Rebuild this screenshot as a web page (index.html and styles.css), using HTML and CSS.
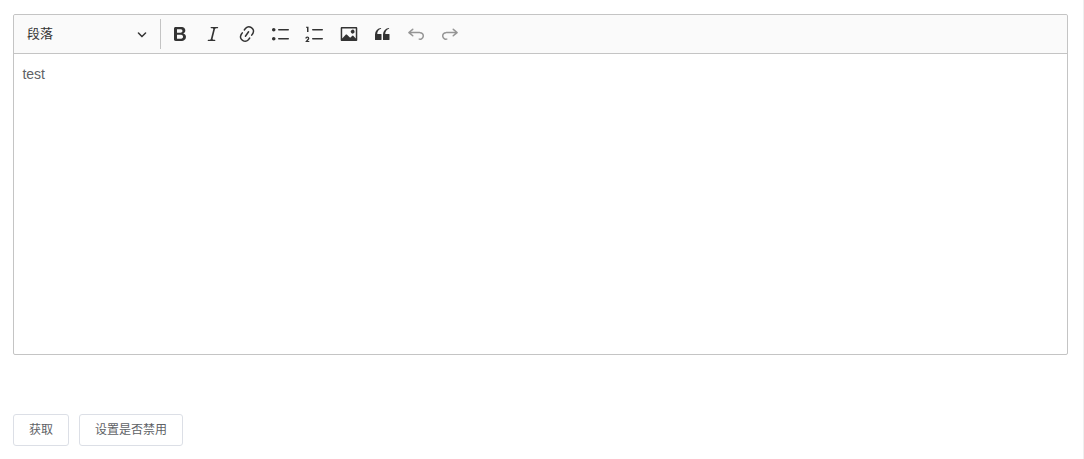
FILE: index.html
```html
<!DOCTYPE html>
<html lang="zh-CN">
    <head>
        <meta charset="UTF-8" />
        <meta name="viewport" content="width=device-width, initial-scale=1.0" />
        <title>富文本编辑器</title>
        <link rel="stylesheet" href="styles.css">
    </head>
    <body>
        <div class="editor">
            <div class="toolbar">
                <button class="heading">
                    <span class="label">段落</span>
                    <svg class="arrow" viewBox="0 0 10 10"><path d="M.941 4.523a.75.75 0 1 1 1.06-1.06l3.006 3.005 3.005-3.005a.75.75 0 1 1 1.06 1.06l-3.549 3.55a.75.75 0 0 1-1.168-.136L.941 4.523z"/></svg>
                </button>
                <span class="separator"></span>
                <button class="tool" title="加粗">
                    <svg viewBox="0 0 20 20"><path d="M10.187 17H5.773c-.637 0-1.092-.138-1.364-.415-.273-.277-.409-.718-.409-1.323V4.738c0-.617.14-1.062.419-1.332.279-.27.73-.406 1.354-.406h4.68c.69 0 1.288.041 1.793.124.506.083.96.242 1.36.478.341.197.644.447.906.75a3.262 3.262 0 0 1 .808 2.162c0 1.401-.722 2.426-2.167 3.075C15.05 10.175 16 11.315 16 13.01a3.756 3.756 0 0 1-2.296 3.504 6.1 6.1 0 0 1-1.517.377c-.571.073-1.238.11-2 .11zm-.217-6.217H7v4.087h3.069c1.977 0 2.965-.69 2.965-2.072 0-.707-.256-1.22-.768-1.537-.512-.319-1.277-.478-2.296-.478zM7 5.13v3.619h2.606c.729 0 1.292-.067 1.69-.2a1.6 1.6 0 0 0 .91-.765c.165-.267.247-.566.247-.897 0-.707-.26-1.176-.778-1.409-.519-.232-1.31-.348-2.375-.348H7z"/></svg>
                </button>
                <button class="tool" title="倾斜">
                    <svg viewBox="0 0 20 20"><path d="M9.586 14.633l.021.004c-.036.335.095.655.393.962.082.083.173.15.274.201h1.474a.6.6 0 1 1 0 1.2H5.304a.6.6 0 0 1 0-1.2h1.15c.474-.07.809-.182 1.005-.334.157-.122.291-.32.404-.597l2.416-9.55a1.053 1.053 0 0 0-.281-.823 1.12 1.12 0 0 0-.442-.296H8.15a.6.6 0 0 1 0-1.2h6.443a.6.6 0 1 1 0 1.2h-1.195c-.376.056-.65.155-.823.296-.215.175-.423.439-.623.79l-2.366 9.347z"/></svg>
                </button>
                <button class="tool" title="超链接">
                    <svg viewBox="0 0 20 20"><path d="M11.077 15l.991-1.416a.75.75 0 1 1 1.229.86l-1.148 1.64a.748.748 0 0 1-.217.206 5.251 5.251 0 0 1-8.503-5.955.741.741 0 0 1 .12-.274l1.147-1.639a.75.75 0 1 1 1.228.86L4.933 10.7l.006.003a3.75 3.75 0 0 0 6.132 4.294l.006.004zm5.494-5.335a.748.748 0 0 1-.12.274l-1.147 1.639a.75.75 0 1 1-1.228-.86l.86-1.23a3.75 3.75 0 0 0-6.144-4.301l-.86 1.229a.75.75 0 0 1-1.229-.86l1.148-1.64a.748.748 0 0 1 .217-.206 5.251 5.251 0 0 1 8.503 5.955zm-4.563-2.532a.75.75 0 0 1 .184 1.045l-3.155 4.505a.75.75 0 1 1-1.229-.86l3.155-4.506a.75.75 0 0 1 1.045-.184z"/></svg>
                </button>
                <button class="tool" title="项目符号列表">
                    <svg viewBox="0 0 20 20"><path d="M7 5.75c0 .414.336.75.75.75h9.5a.75.75 0 1 0 0-1.5h-9.5a.75.75 0 0 0-.75.75zm-6 0C1 4.784 1.777 4 2.75 4c.966 0 1.75.777 1.75 1.75 0 .966-.777 1.75-1.75 1.75C1.784 7.5 1 6.723 1 5.75zm6 9c0 .414.336.75.75.75h9.5a.75.75 0 1 0 0-1.5h-9.5a.75.75 0 0 0-.75.75zm-6 0c0-.966.777-1.75 1.75-1.75.966 0 1.75.777 1.75 1.75 0 .966-.777 1.75-1.75 1.75-.966 0-1.75-.777-1.75-1.75z"/></svg>
                </button>
                <button class="tool" title="项目编号列表">
                    <svg viewBox="0 0 20 20"><path d="M7 5.75c0 .414.336.75.75.75h9.5a.75.75 0 1 0 0-1.5h-9.5a.75.75 0 0 0-.75.75zM3.5 3v5H2V3.7H1v-1h2.5V3zM.343 17.857l2.59-3.257H2.92a.6.6 0 1 0-1.04 0H.302a2 2 0 1 1 3.995 0h-.001c-.048.405-.16.734-.333.988-.175.254-.59.692-1.244 1.312H4.3v1h-4l.043-.043zM7 14.75a.75.75 0 0 1 .75-.75h9.5a.75.75 0 1 1 0 1.5h-9.5a.75.75 0 0 1-.75-.75z"/></svg>
                </button>
                <button class="tool" title="插入图像">
                    <svg viewBox="0 0 20 20"><path d="M6.91 10.54c.26-.23.64-.21.88.03l3.36 3.14 2.23-2.06a.64.64 0 0 1 .87 0l2.52 2.97V4.5H3.2v10.12l3.71-4.08zm10.27-7.51c.6 0 1.09.47 1.09 1.05v11.84c0 .59-.49 1.06-1.09 1.06H2.79c-.6 0-1.09-.47-1.09-1.06V4.08c0-.58.49-1.05 1.1-1.05h14.38zm-5.22 5.56a1.96 1.96 0 1 1 3.4-1.96 1.96 1.96 0 0 1-3.4 1.96z"/></svg>
                </button>
                <button class="tool" title="块引用">
                    <svg viewBox="0 0 20 20"><path d="M3 10.423a6.5 6.5 0 0 1 6.056-6.408l.038.67C6.448 5.423 5.354 7.663 5.22 10H9c.552 0 .5.432.5.986v4.511c0 .554-.448.503-1 .503h-5c-.552 0-.5-.449-.5-1.003v-4.574zm8 0a6.5 6.5 0 0 1 6.056-6.408l.038.67c-2.646.739-3.74 2.979-3.873 5.315H17c.552 0 .5.432.5.986v4.511c0 .554-.448.503-1 .503h-5c-.552 0-.5-.449-.5-1.003v-4.574z"/></svg>
                </button>
                <button class="tool" title="撤销" disabled>
                    <svg viewBox="0 0 20 20"><path d="M5.042 9.367l2.189 1.837a.75.75 0 0 1-.965 1.149l-3.788-3.18a.747.747 0 0 1-.21-.284.75.75 0 0 1 .17-.945L6.23 4.762a.75.75 0 1 1 .964 1.15L4.863 7.866h8.917A.75.75 0 0 1 14 7.9a4 4 0 1 1-1.477 7.718l.344-1.489a2.5 2.5 0 1 0 1.094-4.73l.008-.032H5.042z"/></svg>
                </button>
                <button class="tool" title="重做" disabled>
                    <svg viewBox="0 0 20 20"><path d="M14.958 9.367l-2.189 1.837a.75.75 0 0 0 .965 1.149l3.788-3.18a.747.747 0 0 0 .21-.284.75.75 0 0 0-.17-.945L13.77 4.762a.75.75 0 1 0-.964 1.15l2.331 1.955H6.22A.75.75 0 0 0 6 7.9a4 4 0 1 0 1.477 7.718l-.344-1.489A2.5 2.5 0 1 1 6.039 9.4l-.008-.032h8.927z"/></svg>
                </button>
            </div>
            <div class="content" contenteditable="true">
                <p>test</p>
            </div>
        </div>
        <div class="btnBox">
            <button class="btn">获取</button>
            <button class="btn">设置是否禁用</button>
        </div>
    </body>
</html>
```
FILE: styles.css
```css
* {
    box-sizing: border-box;
}
body {
    margin: 0;
    height: 459px;
    padding: 14px 15px 0 13px;
    border-right: 1px solid #efefef;
    background-color: #fff;
    font-family: "Liberation Sans", "Noto Sans CJK SC", sans-serif;
}
button {
    font-family: inherit;
    cursor: pointer;
}
.editor {
    height: 341px;
    border: 1px solid #c4c4c4;
    border-radius: 2px;
    display: flex;
    flex-direction: column;
}
.toolbar {
    height: 39px;
    display: flex;
    align-items: center;
    gap: 3.785px;
    border-bottom: 1px solid #c4c4c4;
    border-radius: 2px 2px 0 0;
    background-color: #fafafa;
}
.heading {
    width: 142px;
    height: 30px;
    margin-right: 0.08px;
    padding: 0 9px 0 13px;
    display: flex;
    align-items: center;
    justify-content: space-between;
    border: none;
    background: none;
    color: #333;
    font-size: 13px;
}
.label {
    padding-bottom: 4px;
}
.arrow {
    width: 10px;
    height: 10px;
}
.separator {
    width: 1px;
    height: 30px;
    background-color: #c4c4c4;
}
.tool {
    width: 30px;
    height: 30px;
    padding: 5px;
    border: none;
    background: none;
    color: #333;
}
.tool svg {
    display: block;
    width: 20px;
    height: 20px;
}
.toolbar path {
    fill: #333;
}
.tool:disabled {
    opacity: 0.5;
    cursor: default;
}
.content {
    flex: 1;
    padding: 0 8.5px;
    outline: none;
    color: #606266;
    font-size: 14px;
    letter-spacing: -0.1px;
}
.content p {
    margin: 10px 0;
    line-height: 20px;
}
.btnBox {
    display: flex;
    gap: 10px;
    margin-top: 59px;
}
.btn {
    height: 32px;
    padding: 0 15px 3px;
    border: 1px solid #dcdfe6;
    border-radius: 3px;
    background-color: #fff;
    color: #606266;
    font-size: 12px;
}
```
